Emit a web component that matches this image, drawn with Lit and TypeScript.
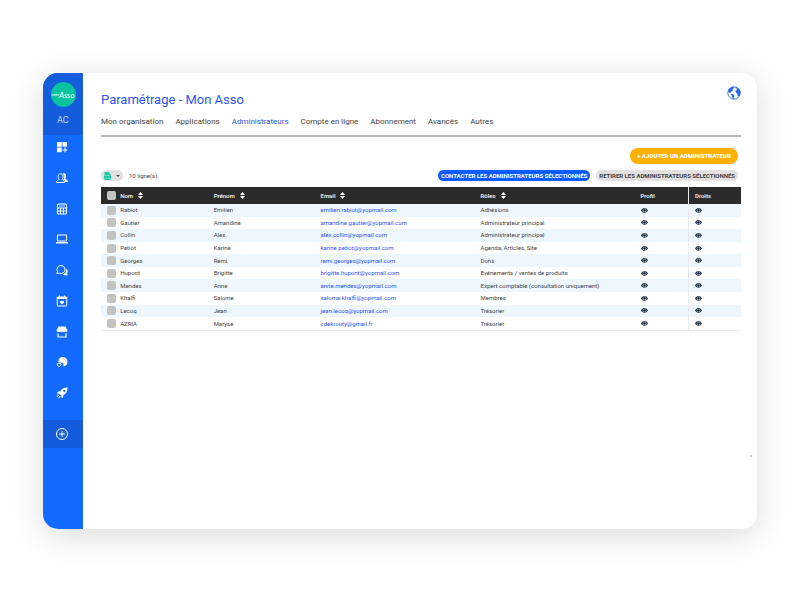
import { LitElement, html, svg, css } from "lit";
import { customElement, property, state } from "lit/decorators.js";
import { classMap } from "lit/directives/class-map.js";

interface Admin {
  nom: string;
  prenom: string;
  email: string;
  roles: string;
}

const ADMINS: Admin[] = [
  { nom: "Rabiot", prenom: "Emilien", email: "emilien.rabiot@yopmail.com", roles: "Adhésions" },
  { nom: "Gautier", prenom: "Amandine", email: "amandine.gautier@yopmail.com", roles: "Administrateur principal" },
  { nom: "Collin", prenom: "Alex", email: "alex.collin@yopmail.com", roles: "Administrateur principal" },
  { nom: "Petiot", prenom: "Karine", email: "karine.petiot@yopmail.com", roles: "Agenda, Articles, Site" },
  { nom: "Georges", prenom: "Remi", email: "remi.georges@yopmail.com", roles: "Dons" },
  { nom: "Hupont", prenom: "Brigitte", email: "brigitte.hupont@yopmail.com", roles: "Evénements / ventes de produits" },
  { nom: "Mendes", prenom: "Anne", email: "anne.mendes@yopmail.com", roles: "Expert comptable (consultation uniquement)" },
  { nom: "Khalfi", prenom: "Salome", email: "salome.khalfi@yopmail.com", roles: "Membres" },
  { nom: "Lecoq", prenom: "Jean", email: "jean.lecoq@yopmail.com", roles: "Trésorier" },
  { nom: "AZRIA", prenom: "Maryse", email: "cdekrouty@gmail.fr", roles: "Trésorier" },
];

const TABS = ["Mon organisation", "Applications", "Administrateurs", "Compte en ligne", "Abonnement", "Avancés", "Autres"];

// Sidebar glyphs, drawn on a 24 x 24 grid in the current colour.
const NAV = [
  {
    label: "Tableau de bord",
    art: svg`<path fill="currentColor" d="M2 2h9.500v9.500H2zM13 2h9v9.500h-9zM2 13h9.500v9.500H2z"/><path fill="none" stroke="currentColor" stroke-width="2" d="M18 13v10M13 18h10"/>`,
  },
  {
    label: "Membres",
    art: svg`<path fill="none" stroke="currentColor" stroke-width="1.800" d="M1 21v-2.500c0-1.500 4.500-1.500 5-3.500-3-4-2.500-11.500 3-11.500s6 7.500 3 11.500c.5 2 5 2 5 3.500V21z"/><path fill="currentColor" d="M13 3c5-2 8 1.500 7 6.500-.3 2-1 3-1.500 4 .5 2 5 2 5 4.500v2h-5c0-3-1.500-4-4-5 2-4 2-9-1.500-12z"/>`,
  },
  {
    label: "Comptabilité",
    art: svg`<rect x="3" y="2" width="18" height="20" rx="2" fill="none" stroke="currentColor" stroke-width="2.200"/><path fill="none" stroke="currentColor" stroke-width="2" d="M3 10h18M3 16h18M9 10v12M15 10v12"/><path stroke="currentColor" stroke-width="1.500" d="M6 6h12"/>`,
  },
  {
    label: "Site internet",
    art: svg`<rect x="3" y="4" width="18" height="12" rx="1" fill="none" stroke="currentColor" stroke-width="2.200"/><path fill="none" stroke="currentColor" stroke-width="3" d="M0 19.500h24"/>`,
  },
  {
    label: "Communication",
    art: svg`<path fill="none" stroke="currentColor" stroke-width="2" d="M1.500 19l1.500-4a8 8 0 1 1 4 3.500z"/><path fill="currentColor" d="M20 9c4.500 3 4 7.500 2 10l1.500 3.500c-4 .5-8 .5-10-1.500 5-1 7.500-5.500 6.500-12z"/>`,
  },
  {
    label: "Événements",
    art: svg`<rect x="2.500" y="4" width="19" height="18" rx="1" fill="none" stroke="currentColor" stroke-width="2"/><path fill="currentColor" d="M2 4h20v4H2zM6 1h2v4H6zM16 1h2v4h-2zM12 19l-4-4c-1-3 3-4.500 4-2 1-2.500 5-1 4 2z"/>`,
  },
  {
    label: "Boutique",
    art: svg`<path fill="currentColor" d="M5 1h14l4 8c0 3-3 4-4.500 2-1.500 2-3.500 2-4.500 0-1 2-3 2-4 0-1 2-3 2-4 0C4.500 13 1 12 1 9z"/><path fill="none" stroke="currentColor" stroke-width="2.400" d="M4 14.500V22h16v-7.500"/>`,
  },
  {
    label: "Dons",
    art: svg`<path fill="currentColor" d="M5 9c0-10 18-10 18 2.500 0 6-4 9-8.500 9.500 1-3 .5-6-1.500-8-2 0-2 1-3 1-1.500-1-3.500-1.500-5-.5z"/><path fill="none" stroke="currentColor" stroke-width="2" d="M6 21.500l-3.500-3.500c-1.500-3 2-4.500 3.500-2 1.500-2.500 5-1 4 2z"/>`,
  },
  {
    label: "Démarrage",
    art: svg`<path fill="currentColor" fill-rule="evenodd" d="M23 1c.5 7-2 12-8 15l-1 5-3 1-.5-5L7 13.500 2 13l1.500-3.500 5-1C12 3 17 1 23 1zm-6.500 4.500a2.200 2.200 0 1 0 .1 0z"/><path fill="none" stroke="currentColor" stroke-width="2" d="M6.500 15.500L2 20M8.500 18L5 22.500M4 15l-2 2"/>`,
  },
];

@customElement("sort-mark")
class SortMark extends LitElement {
  static styles = css`
    :host { display: inline-flex; }
    .mark { width: 5px; height: 7px; fill: #fff; }
  `;
  render() {
    return html`<svg class="mark" viewBox="0 0 10 14"><path d="M5 0L10 6H0zM0 8H10L5 14z" /></svg>`;
  }
}

@customElement("side-bar")
class SideBar extends LitElement {
  static styles = css`
    :host {
      display: block;
      background: #126bfc;
      color: #fff;
      font-family: Roboto, sans-serif;
    }
    .brand {
      box-sizing: border-box;
      height: 62px;
      padding-top: 9px;
      background: #145cdc;
      display: flex;
      flex-direction: column;
      align-items: center;
      gap: 8px;
    }
    .logo {
      width: 25px;
      height: 25px;
      border-radius: 50%;
      background: #08c39f;
      color: #fff;
      display: flex;
      align-items: center;
      justify-content: center;
      font-family: Lato, sans-serif;
      font-style: italic;
      font-size: 8px;
      text-decoration: none;
    }
    .small { font-size: 4px; }
    .initials {
      font-size: 9px;
      line-height: 11px;
      font-weight: 300;
    }
    .nav {
      display: flex;
      flex-direction: column;
      align-items: center;
      justify-content: space-between;
      min-height: 258px;
      margin: 6px 0 21px;
      padding: 0 2px 0 0;
      list-style: none;
    }
    .link {
      display: flex;
      color: inherit;
    }
    .icon { width: 12px; height: 12px; }
    .add {
      width: 100%;
      height: 28px;
      padding: 0 2px 0 0;
      border: 0;
      background: #145cdc;
      color: #fff;
      display: flex;
      align-items: center;
      justify-content: center;
    }
  `;
  render() {
    return html`
      <div class="brand">
        <a class="logo" href="#" aria-label="monAsso"><span class="small">mon</span>Asso</a>
        <span class="initials">AC</span>
      </div>
      <ul class="nav">
        ${NAV.map(
          (n) => html`<li>
            <a class="link" href="#" aria-label=${n.label}><svg class="icon" viewBox="0 0 24 24">${n.art}</svg></a>
          </li>`
        )}
      </ul>
      <button class="add" aria-label="Ajouter">
        <svg class="icon" viewBox="0 0 24 24" fill="none" stroke="currentColor" stroke-width="2">
          <circle cx="12" cy="12" r="11" />
          <path d="M12 6v12M6 12h12" />
        </svg>
      </button>
    `;
  }
}

@customElement("admin-table")
class AdminTable extends LitElement {
  @property({ attribute: false }) rows: Admin[] = [];

  static styles = css`
    :host {
      display: block;
      font-family: Roboto, sans-serif;
      font-size: 6px;
      line-height: 8px;
      color: #444;
    }
    .table {
      width: 100%;
      height: 144px;
      table-layout: fixed;
      border-collapse: collapse;
      border-bottom: 1px solid #eee;
    }
    .check { width: 3%; }
    .nom { width: 14.6%; }
    .prenom { width: 16.7%; }
    .wide { width: 25%; }
    .profil { width: 7.5%; }
    th, td {
      padding: 0;
      text-align: left;
      vertical-align: middle;
      white-space: nowrap;
    }
    .head th {
      height: 17px;
      background: #2b2b2b;
      color: #fff;
      font-weight: 500;
    }
    .sort {
      display: flex;
      align-items: center;
      gap: 5px;
      padding: 0;
      border: 0;
      background: none;
      color: inherit;
      font: inherit;
    }
    .row:nth-child(odd) { background: #eff7fe; }
    .box {
      appearance: none;
      display: block;
      width: 9px;
      height: 9px;
      margin: 0 0 0 6px;
      border-radius: 2px;
      background: #c4c3c0;
    }
    .box:checked { background: #126bfc; }
    .mail {
      color: #2e55f5;
      text-decoration: none;
    }
    .last {
      padding-left: 6px;
      border-left: 1px solid #e6eaee;
    }
    .view {
      display: flex;
      padding: 0;
      border: 0;
      background: none;
      color: #26384c;
    }
    .eye { width: 7px; height: 5px; }
  `;

  private eye(label: string) {
    return html`<button class="view" aria-label=${label}>
      <svg class="eye" viewBox="0 0 14 10">
        <path fill="currentColor" fill-rule="evenodd" d="M0 5C4-1.500 10-1.500 14 5 10 11.500 4 11.500 0 5zm7-3.500a3.500 3.500 0 1 0 .1 0z" />
        <circle cx="7" cy="5" r="2.800" fill="currentColor" />
      </svg>
    </button>`;
  }

  private heading(label: string) {
    return html`<th scope="col"><button class="sort">${label}<sort-mark></sort-mark></button></th>`;
  }

  render() {
    return html`
      <table class="table">
        <colgroup>
          <col class="check" /><col class="nom" /><col class="prenom" /><col class="wide" /><col class="wide" /><col class="profil" /><col />
        </colgroup>
        <thead>
          <tr class="head">
            <th><input class="box" type="checkbox" aria-label="Tout sélectionner" /></th>
            ${["Nom", "Prénom", "Email", "Rôles"].map((h) => this.heading(h))}
            <th scope="col">Profil</th>
            <th scope="col" class="last">Droits</th>
          </tr>
        </thead>
        <tbody>
          ${this.rows.map(
            (r) => html`<tr class="row">
              <td><input class="box" type="checkbox" aria-label=${`Sélectionner ${r.prenom} ${r.nom}`} /></td>
              <td>${r.nom}</td>
              <td>${r.prenom}</td>
              <td><a class="mail" href=${`mailto:${r.email}`}>${r.email}</a></td>
              <td>${r.roles}</td>
              <td>${this.eye(`Profil de ${r.prenom}`)}</td>
              <td class="last">${this.eye(`Droits de ${r.prenom}`)}</td>
            </tr>`
          )}
        </tbody>
      </table>
    `;
  }
}

@customElement("app-root")
class AppRoot extends LitElement {
  @state() private tab = "Administrateurs";

  static styles = css`
    :host {
      display: flex;
      box-sizing: border-box;
      min-height: 100vh;
      padding: 73px 43px 69px;
      background: #fff;
      font-family: Roboto, sans-serif;
      color: #444;
    }
    .card {
      position: relative;
      flex: 1;
      display: grid;
      grid-template-columns: 40px minmax(0, 1fr);
      border-radius: 15px;
      background: #fff;
      box-shadow: 0 6px 32px rgba(0, 0, 0, 0.15);
    }
    .card::after {
      content: "";
      position: absolute;
      right: 5px;
      bottom: 72px;
      width: 2px;
      height: 2px;
      background: #ccc;
    }
    .side { border-radius: 15px 0 0 15px; overflow: hidden; }
    .main { padding: 12px 16px 12px 18px; }
    .top {
      display: flex;
      justify-content: space-between;
      align-items: flex-start;
    }
    .title {
      margin: 6px 0 0;
      font-size: 13px;
      line-height: 18px;
      font-weight: 400;
      color: #2e55f5;
    }
    .globe {
      padding: 0;
      margin-top: 1px;
      border: 0;
      background: none;
      color: #2563eb;
      display: flex;
    }
    .world { width: 14px; height: 14px; }
    .tabs {
      display: flex;
      gap: 12px;
      padding: 7px 0;
      border-bottom: 2px solid #b8b8b8;
      font-size: 8px;
      line-height: 12px;
    }
    .tab { color: inherit; text-decoration: none; }
    .active { color: #2e55f5; }
    .primary {
      display: flex;
      justify-content: flex-end;
      padding: 11px 3px 6px 0;
    }
    .tools {
      display: flex;
      align-items: center;
      gap: 6px;
      padding: 0 3px 6px 0;
      font-size: 6px;
      line-height: 8px;
    }
    .count { flex: 1; }
    .pill {
      border: 0;
      border-radius: 8px;
      height: 11px;
      padding: 0 3px;
      font-family: inherit;
      font-size: 6px;
      line-height: 11px;
      font-weight: 700;
      white-space: nowrap;
    }
    .yellow {
      height: 16px;
      padding: 0 7px;
      line-height: 16px;
      font-weight: 900;
      background: #ffb000;
      color: #fff;
    }
    .blue { background: #0b5cff; color: #fff; }
    .grey { background: #e2e1df; color: #444; }
    .export {
      display: flex;
      align-items: center;
      gap: 5px;
    }
    .file { width: 7px; height: 8px; }
    .caret { width: 4px; height: 2px; }
  `;

  render() {
    return html`
      <div class="card">
        <side-bar class="side"></side-bar>
        <main class="main">
          <header class="top">
            <h1 class="title">Paramétrage - Mon Asso</h1>
            <button class="globe" aria-label="Langue">
              <svg class="world" viewBox="0 0 28 28">
                <circle cx="14" cy="14" r="12.300" fill="#fff" stroke="currentColor" stroke-width="1.800" />
                <path fill="currentColor" d="M2 10C4 5 8 2 13 1.500l1.500 3-3.500 1 1.500 3-3.500 2-1 2.500-3 .5 1 2zM9 15l4 2 2 3-2 3v3.500c-2-1-3-4-3-6.500l-2-3zM17 2c6 1 9 5 10 10l-1 6-3 3-2-2v-4l-3-1-1-4 3-2-1-3z" />
              </svg>
            </button>
          </header>
          <nav class="tabs">
            ${TABS.map(
              (t) => html`<a
                href="#"
                class=${classMap({ tab: true, active: t === this.tab })}
                @click=${(e: Event) => {
                  e.preventDefault();
                  this.tab = t;
                }}
                >${t}</a
              >`
            )}
          </nav>
          <div class="primary"><button class="pill yellow">+ AJOUTER UN ADMINISTRATEUR</button></div>
          <div class="tools">
            <button class="pill grey export" aria-label="Exporter" aria-haspopup="menu">
              <svg class="file" viewBox="0 0 14 16">
                <path fill="#16c9a6" d="M2 0h7l4 4v3h1v6h-1v3H1v-3H0V7h1V1z" />
                <path stroke="#e2e1df" stroke-width="1" d="M2 7h10M2 12.500h10" />
              </svg>
              <svg class="caret" viewBox="0 0 4 2"><path fill="#444" d="M0 0h4L2 2z" /></svg>
            </button>
            <span class="count">10 ligne(s).</span>
            <button class="pill blue">CONTACTER LES ADMINISTRATEURS SÉLECTIONNÉS</button>
            <button class="pill grey">RETIRER LES ADMINISTRATEURS SÉLECTIONNÉS</button>
          </div>
          <admin-table .rows=${ADMINS}></admin-table>
        </main>
      </div>
    `;
  }
}
